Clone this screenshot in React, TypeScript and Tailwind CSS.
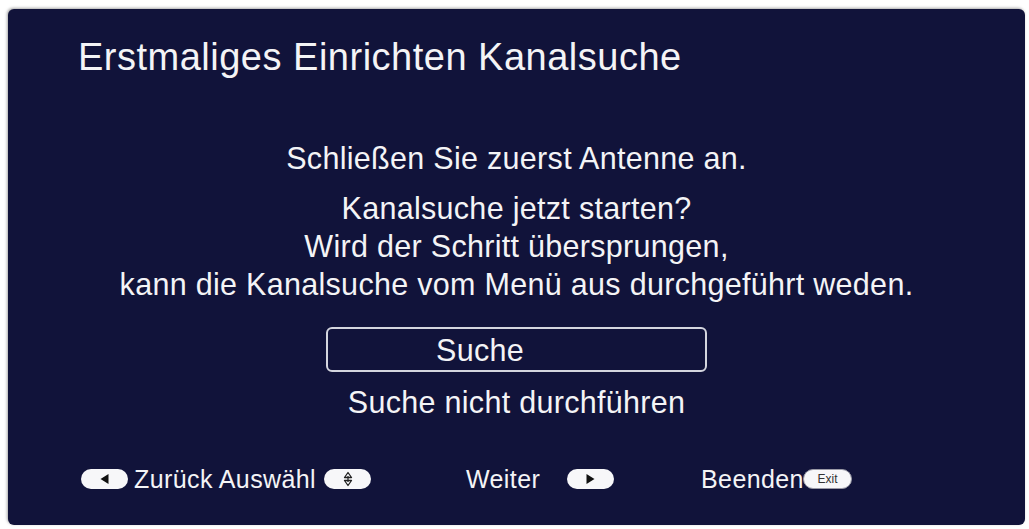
import type { ReactNode } from 'react';

function Pill({ children }: { children: ReactNode }) {
  return (
    <div className="w-[47px] h-[20px] rounded-full bg-[#f7f7f9] flex items-center justify-center shrink-0">
      {children}
    </div>
  );
}

function ArrowLeft() {
  return (
    <svg width="11" height="12" viewBox="0 0 11 12">
      <path d="M1.5 6 L9.5 1 L9.5 11 Z" fill="#111" />
    </svg>
  );
}

function ArrowRight() {
  return (
    <svg width="11" height="12" viewBox="0 0 11 12">
      <path d="M9.5 6 L1.5 1 L1.5 11 Z" fill="#111" />
    </svg>
  );
}

function UpDown() {
  return (
    <svg width="10" height="16" viewBox="0 0 10 16">
      <path d="M5 1.5 L8.5 6.5 L1.5 6.5 Z" fill="none" stroke="#222" strokeWidth="1.3" strokeLinejoin="round" />
      <path d="M5 14.5 L8.5 9.5 L1.5 9.5 Z" fill="none" stroke="#222" strokeWidth="1.3" strokeLinejoin="round" />
      <line x1="5" y1="5" x2="5" y2="11" stroke="#222" strokeWidth="1.2" />
    </svg>
  );
}

export default function App() {
  return (
    <div className="w-[1029px] h-[529px] bg-white overflow-hidden pt-[9px] pl-[8px] font-['Liberation_Sans',Arial,sans-serif]">
      <div className="w-[1017px] h-[516px] rounded-[6px] bg-[#11133a] shadow-[-1px_-1px_3px_rgba(0,0,0,0.35)] text-[#f4f4f6] flex flex-col">
        <div className="pt-[26px] pl-[70px] text-[38px] leading-[44px] tracking-[0.5px] whitespace-nowrap">
          Erstmaliges Einrichten Kanalsuche
        </div>

        <div className="mt-[60px] flex flex-col items-center text-[30.5px] leading-[38px] tracking-[0.3px] whitespace-nowrap">
          <div>Schließen Sie zuerst Antenne an.</div>
          <div className="mt-[12px]">Kanalsuche jetzt starten?</div>
          <div>Wird der Schritt übersprungen,</div>
          <div>kann die Kanalsuche vom Menü aus durchgeführt weden.</div>

          <div className="mt-[24px] w-[381px] h-[45px] rounded-[6px] border-2 border-[#d4d5de] flex items-center pl-[108px]">
            Suche
          </div>
          <div className="mt-[11px]">Suche nicht durchführen</div>
        </div>

        <div className="mt-[46px] h-[24px] pl-[73px] flex items-center text-[25px] leading-[24px] tracking-[0.4px] whitespace-nowrap">
          <Pill>
            <ArrowLeft />
          </Pill>
          <span className="ml-[6px] w-[190px]">Zurück Auswähl</span>
          <Pill>
            <UpDown />
          </Pill>
          <span className="ml-[95px] w-[101px]">Weiter</span>
          <Pill>
            <ArrowRight />
          </Pill>
          <span className="ml-[87px] w-[102px]">Beenden</span>
          <div className="w-[49px] h-[20px] rounded-full bg-[#f7f7f9] border border-[#9a9aa6] flex items-center justify-center text-[12px] leading-none tracking-normal text-[#333]">
            Exit
          </div>
        </div>
      </div>
    </div>
  );
}
